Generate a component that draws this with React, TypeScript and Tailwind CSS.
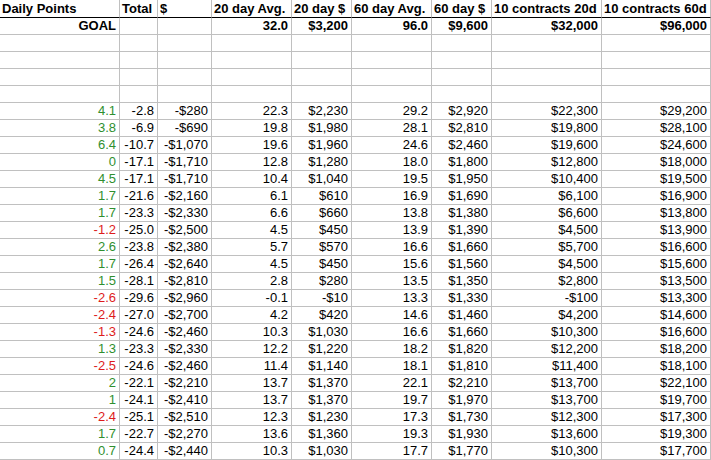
import React from "react";

const headers = [
  "Daily Points",
  "Total",
  "$",
  "20 day Avg.",
  "20 day $",
  "60 day Avg.",
  "60 day $",
  "10 contracts 20d",
  "10 contracts 60d",
];

const goal = ["GOAL", "", "", "32.0", "$3,200", "96.0", "$9,600", "$32,000", "$96,000"];

const data: string[][] = [
  ["4.1", "-2.8", "-$280", "22.3", "$2,230", "29.2", "$2,920", "$22,300", "$29,200"],
  ["3.8", "-6.9", "-$690", "19.8", "$1,980", "28.1", "$2,810", "$19,800", "$28,100"],
  ["6.4", "-10.7", "-$1,070", "19.6", "$1,960", "24.6", "$2,460", "$19,600", "$24,600"],
  ["0", "-17.1", "-$1,710", "12.8", "$1,280", "18.0", "$1,800", "$12,800", "$18,000"],
  ["4.5", "-17.1", "-$1,710", "10.4", "$1,040", "19.5", "$1,950", "$10,400", "$19,500"],
  ["1.7", "-21.6", "-$2,160", "6.1", "$610", "16.9", "$1,690", "$6,100", "$16,900"],
  ["1.7", "-23.3", "-$2,330", "6.6", "$660", "13.8", "$1,380", "$6,600", "$13,800"],
  ["-1.2", "-25.0", "-$2,500", "4.5", "$450", "13.9", "$1,390", "$4,500", "$13,900"],
  ["2.6", "-23.8", "-$2,380", "5.7", "$570", "16.6", "$1,660", "$5,700", "$16,600"],
  ["1.7", "-26.4", "-$2,640", "4.5", "$450", "15.6", "$1,560", "$4,500", "$15,600"],
  ["1.5", "-28.1", "-$2,810", "2.8", "$280", "13.5", "$1,350", "$2,800", "$13,500"],
  ["-2.6", "-29.6", "-$2,960", "-0.1", "-$10", "13.3", "$1,330", "-$100", "$13,300"],
  ["-2.4", "-27.0", "-$2,700", "4.2", "$420", "14.6", "$1,460", "$4,200", "$14,600"],
  ["-1.3", "-24.6", "-$2,460", "10.3", "$1,030", "16.6", "$1,660", "$10,300", "$16,600"],
  ["1.3", "-23.3", "-$2,330", "12.2", "$1,220", "18.2", "$1,820", "$12,200", "$18,200"],
  ["-2.5", "-24.6", "-$2,460", "11.4", "$1,140", "18.1", "$1,810", "$11,400", "$18,100"],
  ["2", "-22.1", "-$2,210", "13.7", "$1,370", "22.1", "$2,210", "$13,700", "$22,100"],
  ["1", "-24.1", "-$2,410", "13.7", "$1,370", "19.7", "$1,970", "$13,700", "$19,700"],
  ["-2.4", "-25.1", "-$2,510", "12.3", "$1,230", "17.3", "$1,730", "$12,300", "$17,300"],
  ["1.7", "-22.7", "-$2,270", "13.6", "$1,360", "19.3", "$1,930", "$13,600", "$19,300"],
  ["0.7", "-24.4", "-$2,440", "10.3", "$1,030", "17.7", "$1,770", "$10,300", "$17,700"],
];

const cell =
  "h-[17px] border-r border-b border-[#c0c0c0] leading-[16px] whitespace-nowrap overflow-hidden";

export default function App() {
  return (
    <div
      className="w-[711px] h-[460px] bg-white text-black text-[13px] overflow-hidden"
      style={{ fontFamily: '"Liberation Sans", Arial, sans-serif' }}
    >
      <div className="grid grid-cols-[120px_38px_54px_80px_60px_80px_60px_110px_109px]">
        {headers.map((h, i) => (
          <div
            key={"h" + i}
            className="h-[18px] border-r border-r-[#c0c0c0] border-b border-b-black font-bold pl-[2px] leading-[17px] whitespace-nowrap overflow-hidden"
          >
            {h}
          </div>
        ))}
        {goal.map((g, i) => (
          <div key={"g" + i} className={cell + " font-bold text-right pr-[3px]"}>
            {g}
          </div>
        ))}
        {[0, 1, 2, 3].map((r) =>
          headers.map((_, i) => <div key={"e" + r + "-" + i} className={cell} />)
        )}
        {data.map((row, r) =>
          row.map((v, i) => {
            let color = "";
            if (i === 0) color = v.startsWith("-") ? " text-[#dd1c1c]" : " text-[#2f8f2f]";
            return (
              <div key={"d" + r + "-" + i} className={cell + " text-right pr-[3px]" + color}>
                {v}
              </div>
            );
          })
        )}
      </div>
    </div>
  );
}
